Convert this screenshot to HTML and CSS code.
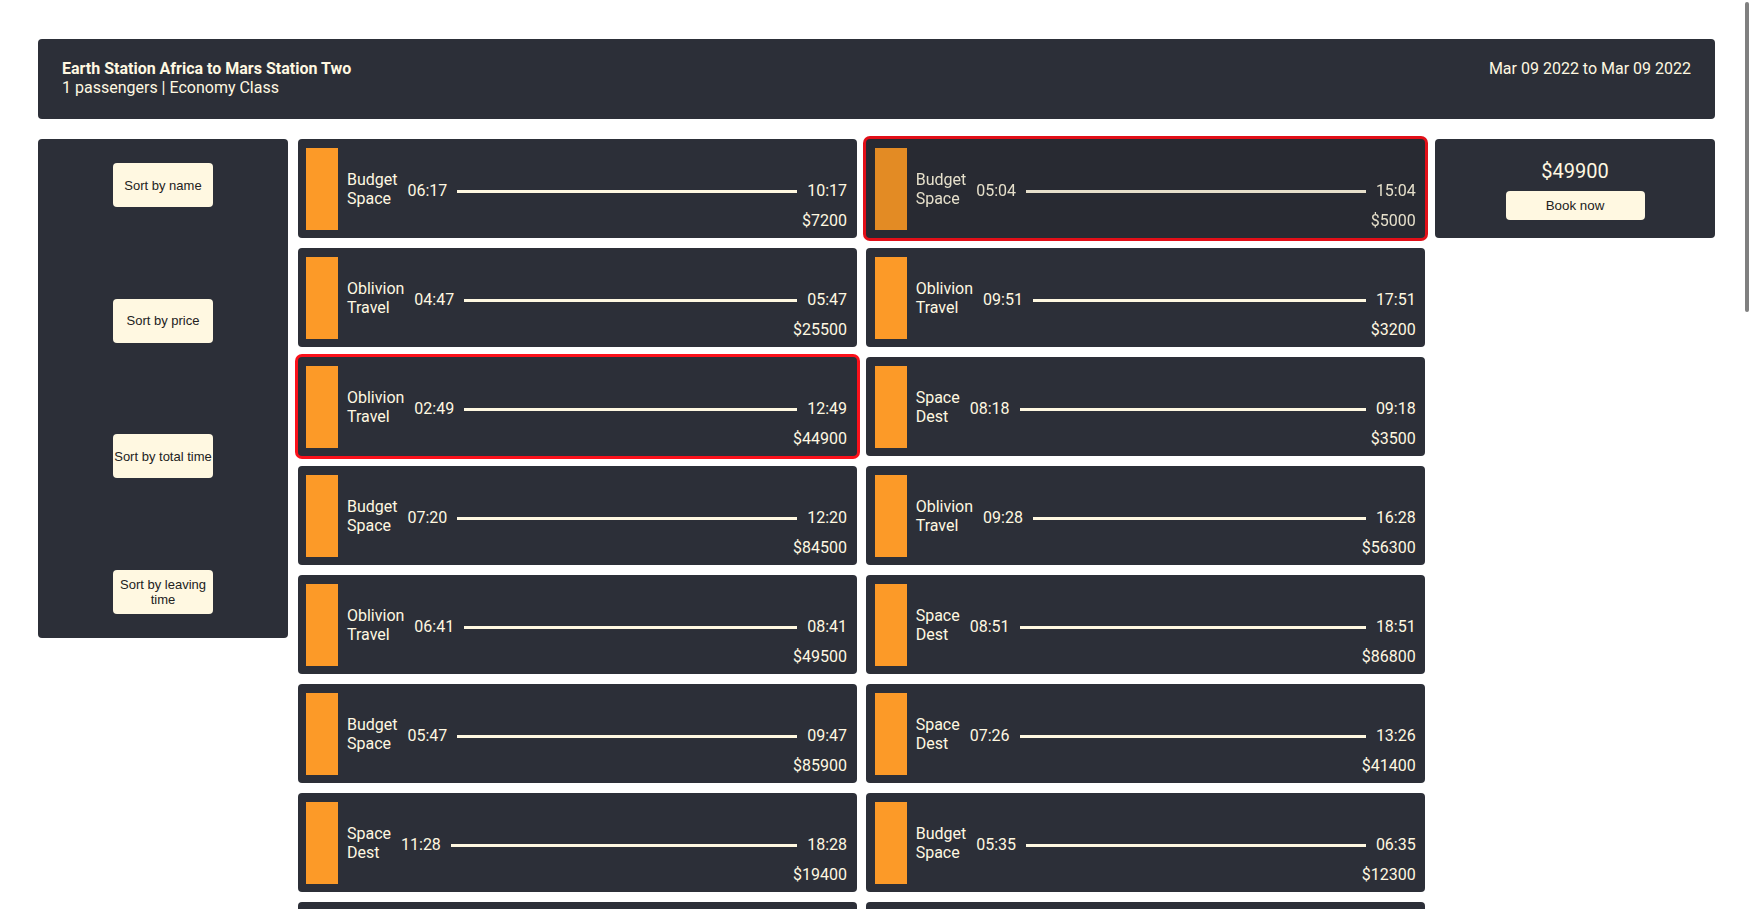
FILE: index.html
```html
<!DOCTYPE html>
<html lang="en">
<head>
<meta charset="utf-8">
<title>Flights: Earth Station Africa to Mars Station Two</title>
<link rel="stylesheet" href="styles.css">
</head>
<body>
<div class="page">
  <header class="trip-header">
    <div class="trip-info">
      <div class="trip-title">Earth Station Africa to Mars Station Two</div>
      <div class="trip-sub">1 passengers | Economy Class</div>
    </div>
    <div class="trip-dates">Mar 09 2022 to Mar 09 2022</div>
  </header>

  <main class="content">
    <aside class="sidebar">
      <button class="sort-btn">Sort by name</button>
      <button class="sort-btn">Sort by price</button>
      <button class="sort-btn">Sort by total time</button>
      <button class="sort-btn">Sort by leaving time</button>
    </aside>

    <section class="flights">
      <div class="flight"><div class="flight-bar"></div><div class="flight-name">Budget<br>Space</div><div class="flight-main"><div class="flight-times"><span>06:17</span><span class="flight-line"></span><span>10:17</span></div><div class="flight-price">$7200</div></div></div>
      <div class="flight flight--selected flight--dim"><div class="flight-bar"></div><div class="flight-name">Budget<br>Space</div><div class="flight-main"><div class="flight-times"><span>05:04</span><span class="flight-line"></span><span>15:04</span></div><div class="flight-price">$5000</div></div></div>

      <div class="flight"><div class="flight-bar"></div><div class="flight-name">Oblivion<br>Travel</div><div class="flight-main"><div class="flight-times"><span>04:47</span><span class="flight-line"></span><span>05:47</span></div><div class="flight-price">$25500</div></div></div>
      <div class="flight"><div class="flight-bar"></div><div class="flight-name">Oblivion<br>Travel</div><div class="flight-main"><div class="flight-times"><span>09:51</span><span class="flight-line"></span><span>17:51</span></div><div class="flight-price">$3200</div></div></div>

      <div class="flight flight--selected"><div class="flight-bar"></div><div class="flight-name">Oblivion<br>Travel</div><div class="flight-main"><div class="flight-times"><span>02:49</span><span class="flight-line"></span><span>12:49</span></div><div class="flight-price">$44900</div></div></div>
      <div class="flight"><div class="flight-bar"></div><div class="flight-name">Space<br>Dest</div><div class="flight-main"><div class="flight-times"><span>08:18</span><span class="flight-line"></span><span>09:18</span></div><div class="flight-price">$3500</div></div></div>

      <div class="flight"><div class="flight-bar"></div><div class="flight-name">Budget<br>Space</div><div class="flight-main"><div class="flight-times"><span>07:20</span><span class="flight-line"></span><span>12:20</span></div><div class="flight-price">$84500</div></div></div>
      <div class="flight"><div class="flight-bar"></div><div class="flight-name">Oblivion<br>Travel</div><div class="flight-main"><div class="flight-times"><span>09:28</span><span class="flight-line"></span><span>16:28</span></div><div class="flight-price">$56300</div></div></div>

      <div class="flight"><div class="flight-bar"></div><div class="flight-name">Oblivion<br>Travel</div><div class="flight-main"><div class="flight-times"><span>06:41</span><span class="flight-line"></span><span>08:41</span></div><div class="flight-price">$49500</div></div></div>
      <div class="flight"><div class="flight-bar"></div><div class="flight-name">Space<br>Dest</div><div class="flight-main"><div class="flight-times"><span>08:51</span><span class="flight-line"></span><span>18:51</span></div><div class="flight-price">$86800</div></div></div>

      <div class="flight"><div class="flight-bar"></div><div class="flight-name">Budget<br>Space</div><div class="flight-main"><div class="flight-times"><span>05:47</span><span class="flight-line"></span><span>09:47</span></div><div class="flight-price">$85900</div></div></div>
      <div class="flight"><div class="flight-bar"></div><div class="flight-name">Space<br>Dest</div><div class="flight-main"><div class="flight-times"><span>07:26</span><span class="flight-line"></span><span>13:26</span></div><div class="flight-price">$41400</div></div></div>

      <div class="flight"><div class="flight-bar"></div><div class="flight-name">Space<br>Dest</div><div class="flight-main"><div class="flight-times"><span>11:28</span><span class="flight-line"></span><span>18:28</span></div><div class="flight-price">$19400</div></div></div>
      <div class="flight"><div class="flight-bar"></div><div class="flight-name">Budget<br>Space</div><div class="flight-main"><div class="flight-times"><span>05:35</span><span class="flight-line"></span><span>06:35</span></div><div class="flight-price">$12300</div></div></div>

      <div class="flight"><div class="flight-bar"></div><div class="flight-name">Oblivion<br>Travel</div><div class="flight-main"><div class="flight-times"><span>03:12</span><span class="flight-line"></span><span>09:12</span></div><div class="flight-price">$27600</div></div></div>
      <div class="flight"><div class="flight-bar"></div><div class="flight-name">Space<br>Dest</div><div class="flight-main"><div class="flight-times"><span>10:05</span><span class="flight-line"></span><span>14:05</span></div><div class="flight-price">$61200</div></div></div>

      <div class="flight"><div class="flight-bar"></div><div class="flight-name">Budget<br>Space</div><div class="flight-main"><div class="flight-times"><span>08:40</span><span class="flight-line"></span><span>11:40</span></div><div class="flight-price">$33800</div></div></div>
      <div class="flight"><div class="flight-bar"></div><div class="flight-name">Oblivion<br>Travel</div><div class="flight-main"><div class="flight-times"><span>12:15</span><span class="flight-line"></span><span>19:15</span></div><div class="flight-price">$70100</div></div></div>
    </section>

    <aside class="summary">
      <div class="summary-price">$49900</div>
      <button class="book-btn">Book now</button>
    </aside>
  </main>
</div>
<div class="scroll-thumb"></div>
</body>
</html>
```

FILE: styles.css
```css
html {
  scrollbar-width: none;
}

html::-webkit-scrollbar {
  display: none;
}

body {
  margin: 0;
  background: #ffffff;
}

.page {
  padding: 39px 34px 40px 38px;
  font-family: Roboto, "Liberation Sans", sans-serif;
  font-size: 16px;
  color: #fff8e1;
}

.trip-header {
  box-sizing: border-box;
  height: 80px;
  padding: 20px 24px;
  background: #2c2f38;
  border-radius: 4px;
  display: flex;
  justify-content: space-between;
  align-items: flex-start;
}

.trip-title {
  font-weight: 700;
}

.content {
  margin-top: 20px;
  display: grid;
  grid-template-columns: 250px 1fr 280px;
  gap: 9.6px;
  align-items: start;
}

.sidebar {
  background: #2c2f38;
  border-radius: 4px;
  padding: 24px 0;
  display: flex;
  flex-direction: column;
  align-items: center;
  gap: 91.6px;
}

.sort-btn {
  width: 100px;
  height: 44px;
  padding: 0;
  border: none;
  border-radius: 4px;
  background: #fff8e1;
  color: #222222;
  font-family: "Liberation Sans", Arial, sans-serif;
  font-size: 13px;
  line-height: 15px;
  text-align: center;
}

.flights {
  display: grid;
  grid-template-columns: 1fr 1fr;
  gap: 9.6px;
}

.flight {
  box-sizing: border-box;
  height: 99.4px;
  padding: 8.7px 9.7px 8.7px 8.7px;
  background: #2c2f38;
  border-radius: 4px;
  display: flex;
  align-items: center;
}

.flight--selected {
  box-shadow: 0 0 0 3px #fb111b;
}

.flight--dim {
  filter: brightness(0.9);
}

.flight-bar {
  flex: none;
  width: 32px;
  align-self: stretch;
  background: #fc9a28;
}

.flight-name {
  flex: none;
  margin-left: 8.7px;
  margin-right: 10px;
  padding-top: 2.2px;
  line-height: 18.75px;
}

.flight-main {
  flex: 1;
  align-self: stretch;
  display: grid;
  grid-template-rows: 1fr auto 1fr;
}

.flight-times {
  grid-row: 2;
  display: flex;
  align-items: center;
  gap: 10px;
  padding-top: 5px;
  line-height: 18.75px;
}

.flight-line {
  flex: 1;
  height: 3px;
  background: #fff8e1;
}

.flight-price {
  grid-row: 3;
  align-self: end;
  margin-bottom: -1px;
  text-align: right;
  line-height: 18.75px;
}

.summary {
  box-sizing: border-box;
  height: 99.4px;
  padding-top: 20.6px;
  background: #2c2f38;
  border-radius: 4px;
  display: flex;
  flex-direction: column;
  align-items: center;
  gap: 7.9px;
}

.summary-price {
  font-size: 20px;
  line-height: 23.5px;
}

.book-btn {
  width: 139px;
  height: 29px;
  padding: 0;
  border: none;
  border-radius: 4px;
  background: #fff8e1;
  color: #222222;
  font-family: "Liberation Sans", Arial, sans-serif;
  font-size: 13.33px;
}

.scroll-thumb {
  position: fixed;
  top: 2px;
  right: 0;
  width: 4px;
  height: 310px;
  border-radius: 2px;
  background: #808080;
}
```
